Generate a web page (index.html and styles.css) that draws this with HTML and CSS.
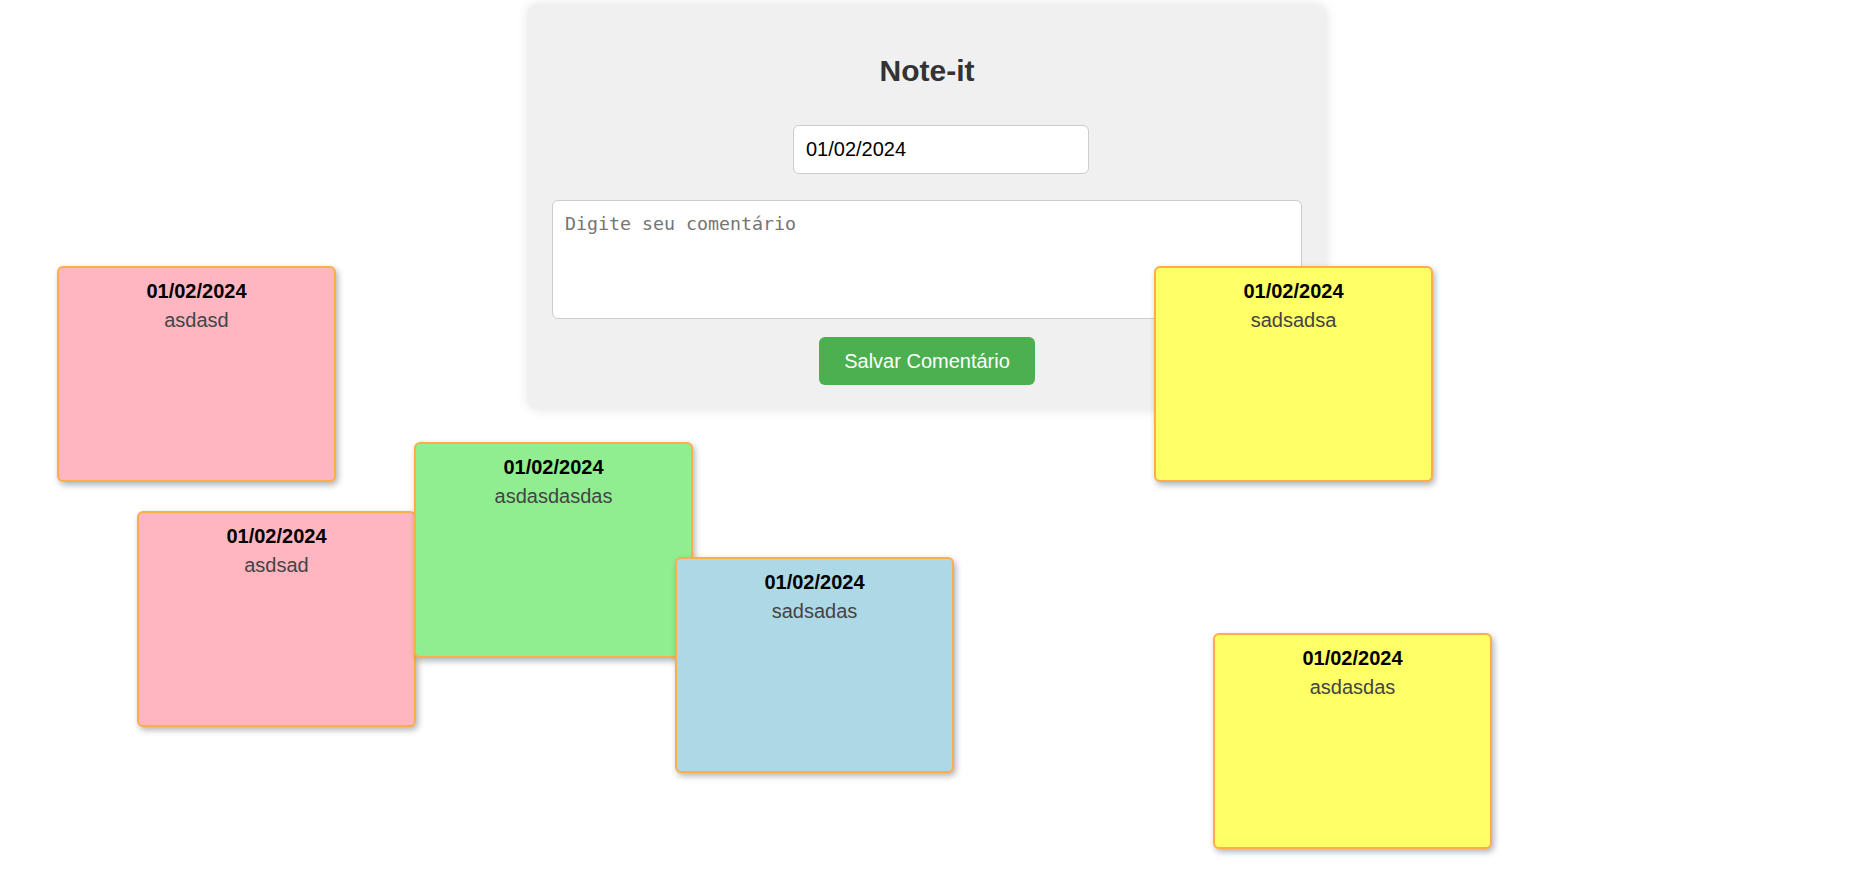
FILE: index.html
```html
<!DOCTYPE html>
<html lang="pt-BR">
<head>
<meta charset="utf-8">
<title>Note-it</title>
<link rel="stylesheet" href="styles.css">
</head>
<body>
  <div class="container">
    <h1 class="title">Note-it</h1>
    <input class="date-input" type="text" value="01/02/2024">
    <textarea class="comment" placeholder="Digite seu comentário"></textarea>
    <button class="save-btn">Salvar Comentário</button>
  </div>

  <div class="note note-pink" style="left:57px;top:266px">
    <div class="note-date">01/02/2024</div>
    <p class="note-text">asdasd</p>
  </div>
  <div class="note note-pink" style="left:137px;top:511px">
    <div class="note-date">01/02/2024</div>
    <p class="note-text">asdsad</p>
  </div>
  <div class="note note-green" style="left:414px;top:442px">
    <div class="note-date">01/02/2024</div>
    <p class="note-text">asdasdasdas</p>
  </div>
  <div class="note note-blue" style="left:675px;top:557px">
    <div class="note-date">01/02/2024</div>
    <p class="note-text">sadsadas</p>
  </div>
  <div class="note note-yellow" style="left:1154px;top:266px">
    <div class="note-date">01/02/2024</div>
    <p class="note-text">sadsadsa</p>
  </div>
  <div class="note note-yellow" style="left:1213px;top:633px">
    <div class="note-date">01/02/2024</div>
    <p class="note-text">asdasdas</p>
  </div>
</body>
</html>
```

FILE: styles.css
```css
html, body {
  margin: 0;
  padding: 0;
  background: #ffffff;
  font-family: "Liberation Sans", Arial, sans-serif;
}

body {
  position: relative;
  min-height: 882px;
  overflow: hidden;
}

.container {
  box-sizing: border-box;
  width: 800px;
  margin: 4px auto 0;
  padding: 25px;
  background: #f0f0f0;
  border-radius: 12px;
  box-shadow: 0 0 12px rgba(0, 0, 0, 0.1);
  display: flex;
  flex-direction: column;
  align-items: center;
}

.title {
  margin: 25px 0 37px;
  font-size: 30px;
  font-weight: bold;
  color: #333333;
  line-height: 34px;
}

.date-input {
  box-sizing: border-box;
  width: 296px;
  height: 49px;
  padding: 0 12px;
  border: 1px solid #cccccc;
  border-radius: 6px;
  background: #ffffff;
  font-family: "Liberation Sans", Arial, sans-serif;
  font-size: 20px;
  color: #000000;
  outline: none;
  margin-left: 28px;
}

.comment {
  box-sizing: border-box;
  width: 750px;
  height: 119px;
  margin-top: 26px;
  padding: 12px;
  border: 1px solid #cccccc;
  border-radius: 6px;
  background: #ffffff;
  font-family: "DejaVu Sans Mono", monospace;
  font-size: 18.3px;
  resize: none;
  outline: none;
}

.comment::placeholder {
  color: #757575;
}

.save-btn {
  box-sizing: border-box;
  height: 48px;
  margin-top: 18px;
  padding: 0 25px;
  border: none;
  border-radius: 6px;
  background: #4caf50;
  color: #ffffff;
  font-family: "Liberation Sans", Arial, sans-serif;
  font-size: 20px;
  cursor: pointer;
}

.note {
  position: absolute;
  box-sizing: border-box;
  width: 279px;
  height: 216px;
  padding: 12px;
  border: 2px solid #ffad48;
  border-radius: 6px;
  box-shadow: 2px 3px 6px rgba(0, 0, 0, 0.3);
  text-align: center;
}

.note-pink { background: #ffb6c1; }
.note-green { background: #90ee90; }
.note-blue { background: #add8e6; }
.note-yellow { background: #ffff66; }

.note-date {
  font-size: 20px;
  font-weight: bold;
  color: #000000;
  line-height: 23px;
}

.note-text {
  margin: 6px 0 0;
  font-size: 20px;
  line-height: 23px;
  color: #444444;
}
```
